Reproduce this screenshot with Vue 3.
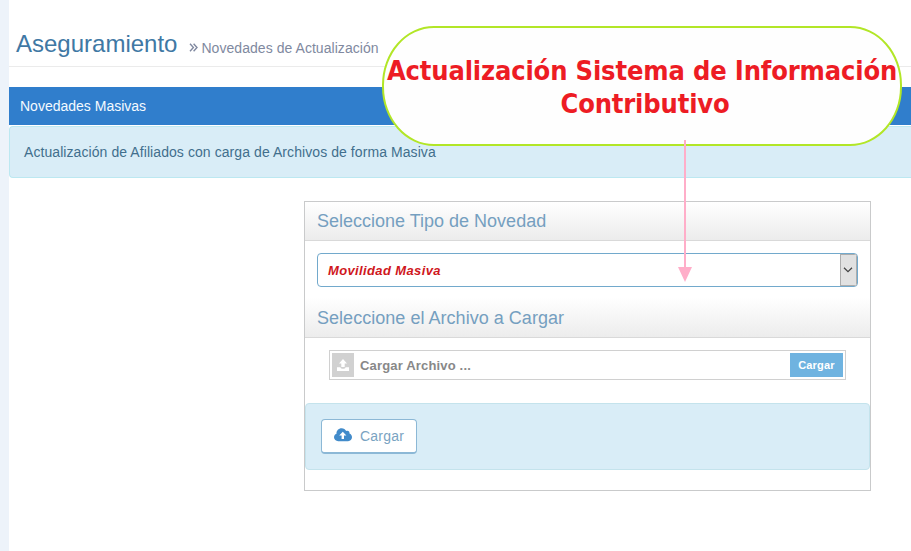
<script setup>
const page = {
  section: 'Aseguramiento',
  crumb: 'Novedades de Actualización',
  bar: 'Novedades Masivas',
  info: 'Actualización de Afiliados con carga de Archivos de forma Masiva',
}
</script>

<template>
  <div class="page">
    <main class="content">
      <header class="page-header">
        <h1>{{ page.section }}</h1>
        <span class="crumb">
          <svg class="chevrons" width="9" height="9" viewBox="0 0 9 9"><path d="M1 .8 4.4 4.5 1 8.2M4.6.8 8 4.5 4.6 8.2" /></svg>
          <span class="crumb-text">{{ page.crumb }}</span>
        </span>
      </header>
      <div class="title-bar"><span>{{ page.bar }}</span></div>
      <div class="info"><span>{{ page.info }}</span></div>

      <section class="panel">
        <div class="panel-head"><span class="h-type">Seleccione Tipo de Novedad</span></div>
        <div class="select">
          <span class="select-value">Movilidad Masiva</span>
          <span class="select-arrow">
            <svg width="10" height="6" viewBox="0 0 10 6"><path d="M1 .8 5 4.6 9 .8" /></svg>
          </span>
        </div>
        <div class="panel-head second"><span class="h-file">Seleccione el Archivo a Cargar</span></div>
        <div class="file">
          <span class="file-icon">
            <svg width="14" height="13" viewBox="0 0 14 13"><path d="M7 0 11 4.400H8.700V8H5.300V4.400H3ZM1 8.200h3.400c.3 1 1.200 1.500 2.600 1.500s2.300-.5 2.600-1.500H13V12H1Z" /></svg>
          </span>
          <span class="file-name">Cargar Archivo ...</span>
          <span class="file-btn">Cargar</span>
        </div>
        <div class="actions">
          <button class="upload">
            <svg width="18" height="14" viewBox="0 0 18 14">
              <path class="cloud" d="M4.200 13.200C1.900 13.200 0 11.500 0 9.300 0 7.600 1 6.200 2.500 5.700 2.300 2.600 4.600.2 7.600.2c2.100 0 3.800 1.100 4.600 2.900 1.800-.9 3.700.5 3.300 2.500C17 6.100 18 7.600 18 9.300c0 2.200-1.700 3.900-3.900 3.900Z" />
              <path class="up" d="M8.800 3.700 12.400 7.500H10V11H7.600V7.500H5.200Z" />
            </svg>
            <span>Cargar</span>
          </button>
        </div>
      </section>
    </main>

    <div class="callout">
      <div class="line-one">Actualización Sistema de Información</div>
      <div class="line-two">Contributivo</div>
    </div>
    <svg class="pointer" width="16" height="143" viewBox="0 0 16 143">
      <path d="M7 0h2v127h6L8 142 1 127h6Z" />
    </svg>
  </div>
</template>

<style>
body {
  margin: 0;
  background: #fff;
}
</style>

<style scoped>
* {
  box-sizing: border-box;
}
.page {
  position: relative;
  width: 911px;
  height: 551px;
  padding-left: 9px;
  overflow: hidden;
  background: linear-gradient(90deg, #edf3fa 9px, #fff 9px);
  font-family: "Liberation Sans", Arial, sans-serif;
  font-size: 14px;
}
.page-header {
  display: flex;
  align-items: baseline;
  height: 67px;
  padding: 30px 0 0 7px;
  border-bottom: 1px solid #ebebeb;
}
h1 {
  margin: 0;
  font-size: 24px;
  line-height: 28px;
  font-weight: 400;
  color: #4078a4;
}
.crumb {
  display: flex;
  align-items: center;
  gap: 3px;
  margin-left: 12px;
  color: #8089a0;
  letter-spacing: 0.05px;
}
.chevrons {
  fill: none;
  stroke: #8089a0;
  stroke-width: 1.4;
}
.title-bar {
  height: 38px;
  margin-top: 20px;
  padding-left: 11px;
  line-height: 38px;
  color: #f4faff;
  background: #307ecc;
}
.info {
  height: 52px;
  margin-top: 1px;
  padding-left: 14px;
  line-height: 51px;
  letter-spacing: 0.075px;
  color: #416f8d;
  background: #d9edf7;
  border: 1px solid #bce8f1;
  border-right: 0;
  border-radius: 4px 0 0 4px;
}
.panel {
  width: 567px;
  height: 290px;
  margin: 23px 0 0 295px;
  border: 1px solid #c9cacb;
}
.panel-head {
  height: 39px;
  padding-left: 12px;
  border-bottom: 1px solid #d9d9d9;
  background: linear-gradient(#fff, #ececec);
  font-size: 18px;
  line-height: 39px;
  color: #759fc0;
}
.panel-head.second {
  height: 40px;
  margin-top: 11px;
  line-height: 40px;
  letter-spacing: 0.03px;
}
.select {
  display: flex;
  height: 34px;
  margin: 12px 12px 0;
  padding-left: 10px;
  border: 1px solid #72a9cc;
  border-radius: 4px;
  overflow: hidden;
}
.select-value {
  flex: 1;
  line-height: 33px;
  font-size: 13px;
  font-weight: 700;
  font-style: italic;
  letter-spacing: 0.37px;
  color: #cf171d;
}
.select-arrow {
  display: flex;
  align-items: center;
  justify-content: center;
  width: 17px;
  padding-right: 1px;
  background: #e1e1e1;
  border: 1px solid #adadad;
}
.select-arrow svg {
  flex: none;
  fill: none;
  stroke: #444;
  stroke-width: 1.3;
}
.file {
  display: flex;
  align-items: center;
  width: 517px;
  height: 30px;
  margin: 12px 0 0 24px;
  padding: 0 2px;
  border: 1px solid #d0d0d0;
}
.file-icon {
  display: flex;
  align-items: center;
  justify-content: center;
  width: 22px;
  height: 24px;
  background: #d1d1d1;
}
.file-icon svg {
  fill: #fff;
}
.file-name {
  flex: 1;
  padding-left: 6px;
  font-size: 13px;
  font-weight: 700;
  letter-spacing: 0.17px;
  color: #888;
}
.file-btn {
  width: 53px;
  height: 24px;
  background: #6fb3e0;
  color: #fff;
  font-size: 11px;
  font-weight: 700;
  line-height: 24px;
  letter-spacing: 0.2px;
  text-align: center;
}
.actions {
  height: 67px;
  margin-top: 23px;
  padding: 15px;
  background: #d9edf7;
  border: 1px solid #c4e3ec;
  border-radius: 4px;
}
.upload {
  display: flex;
  align-items: center;
  width: 96px;
  height: 35px;
  padding: 0 0 0 12px;
  border: 1px solid #8cb8d6;
  border-bottom-width: 2px;
  border-radius: 4px;
  background: #fff;
  font: 14px "Liberation Sans", Arial, sans-serif;
  letter-spacing: 0.2px;
  color: #7aa3c2;
}
.upload span {
  padding-left: 8px;
}
.upload svg {
  margin-bottom: 2px;
}
.cloud {
  fill: #428bca;
}
.up {
  fill: #fff;
}
.callout {
  position: absolute;
  left: 382px;
  top: 26px;
  width: 520px;
  height: 120px;
  padding-top: 26px;
  border: 2px solid #b2e627;
  border-radius: 52px / 59px;
  background: #fefefe;
  font-family: "DejaVu Sans Condensed", "DejaVu Sans", sans-serif;
  font-stretch: condensed;
  font-size: 27px;
  font-weight: 700;
  line-height: 33px;
  letter-spacing: -0.15px;
  color: #ed1c24;
  text-align: center;
  white-space: nowrap;
}
.line-two {
  padding-left: 6px;
}
.pointer {
  position: absolute;
  left: 677px;
  top: 140px;
  fill: #ffaec9;
}
</style>
